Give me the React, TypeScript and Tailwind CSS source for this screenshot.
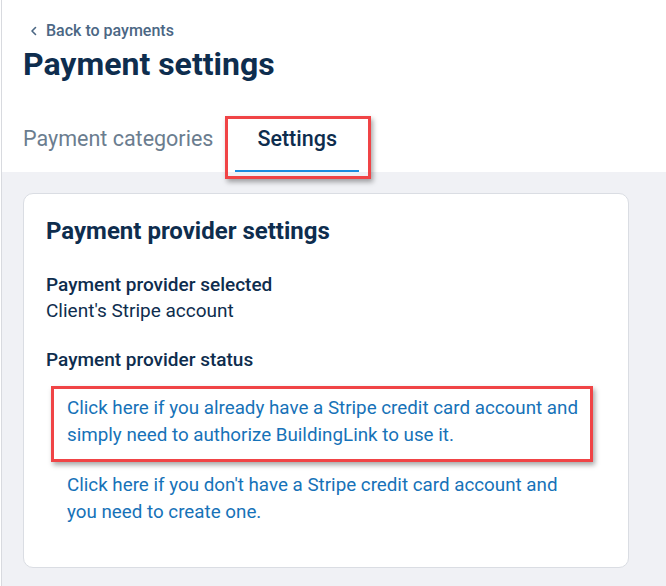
import React from "react";

export default function App() {
  return (
    <div
      className="w-[666px] h-[586px] overflow-hidden bg-white"
      style={{ fontFamily: "Roboto, 'Liberation Sans', sans-serif" }}
    >
      <div className="ml-px h-full border-l border-[#d8dadf] flex flex-col">
        {/* Header */}
        <div className="bg-white pl-[21px] pt-[21px]">
          <div className="flex items-center h-[20px] text-[16px] font-medium text-[#4b6784]">
            <svg width="12" height="12" viewBox="0 0 12 12" className="ml-[5px] mr-[6px]">
              <path d="M7.5 2.5 L4 6 L7.5 9.5" fill="none" stroke="#4b6784" strokeWidth="1.6" strokeLinecap="round" strokeLinejoin="round" />
            </svg>
            <span>Back to payments</span>
          </div>
          <h1 className="mt-[4px] text-[32px] leading-[38px] font-bold text-[#0e2d4e]">
            Payment settings
          </h1>
          <div className="mt-[34px] flex items-end">
            <div className="pt-[8px] pb-[17px] border-b-2 border-transparent text-[21.5px] leading-[28px] text-[#6b7d8f]">
              Payment categories
            </div>
            <div className="relative ml-[22px] px-[22px] pt-[8px] pb-[17px] border-b-2 border-[#1b8de0] text-[21.5px] leading-[28px] font-medium text-[#0e2d4e]">
              Settings
              <div className="absolute left-[-10px] right-[-12px] top-[-1px] bottom-[-9px] border-[3px] border-[#f04446] shadow-[2px_3px_5px_rgba(0,0,0,0.35)] pointer-events-none z-10" />
            </div>
          </div>
        </div>

        {/* Body */}
        <div className="flex-1 bg-[#f0f1f5] pl-[21px] pt-[21px]">
          <div className="w-[606px] rounded-[10px] border border-[#dadde3] bg-white pl-[22px] pt-[22px] pb-[41px]">
            <h2 className="text-[24px] leading-[30px] font-bold text-[#0e2d4e]">
              Payment provider settings
            </h2>
            <div className="mt-[26px] text-[19px] leading-[26px] font-medium text-[#0e2d4e]">
              Payment provider selected
            </div>
            <div className="text-[19px] leading-[26px] text-[#0e2d4e]">
              Client's Stripe account
            </div>
            <div className="mt-[23px] text-[19px] leading-[26px] font-medium text-[#0e2d4e]">
              Payment provider status
            </div>
            <div className="relative ml-[21px] mt-[22px] text-[18.8px] leading-[27px] text-[#1672b8] whitespace-nowrap">
              <a>
                Click here if you already have a Stripe credit card account and
                <br />
                simply need to authorize BuildingLink to use it.
              </a>
              <div className="absolute left-[-16px] w-[542px] top-[-9px] bottom-[-13px] border-[3px] border-[#f04446] shadow-[2px_3px_5px_rgba(0,0,0,0.35)] pointer-events-none" />
            </div>
            <div className="ml-[21px] mt-[23px] text-[18.8px] leading-[27px] text-[#1672b8] whitespace-nowrap">
              <a>
                Click here if you don't have a Stripe credit card account and
                <br />
                you need to create one.
              </a>
            </div>
          </div>
        </div>
      </div>
    </div>
  );
}
